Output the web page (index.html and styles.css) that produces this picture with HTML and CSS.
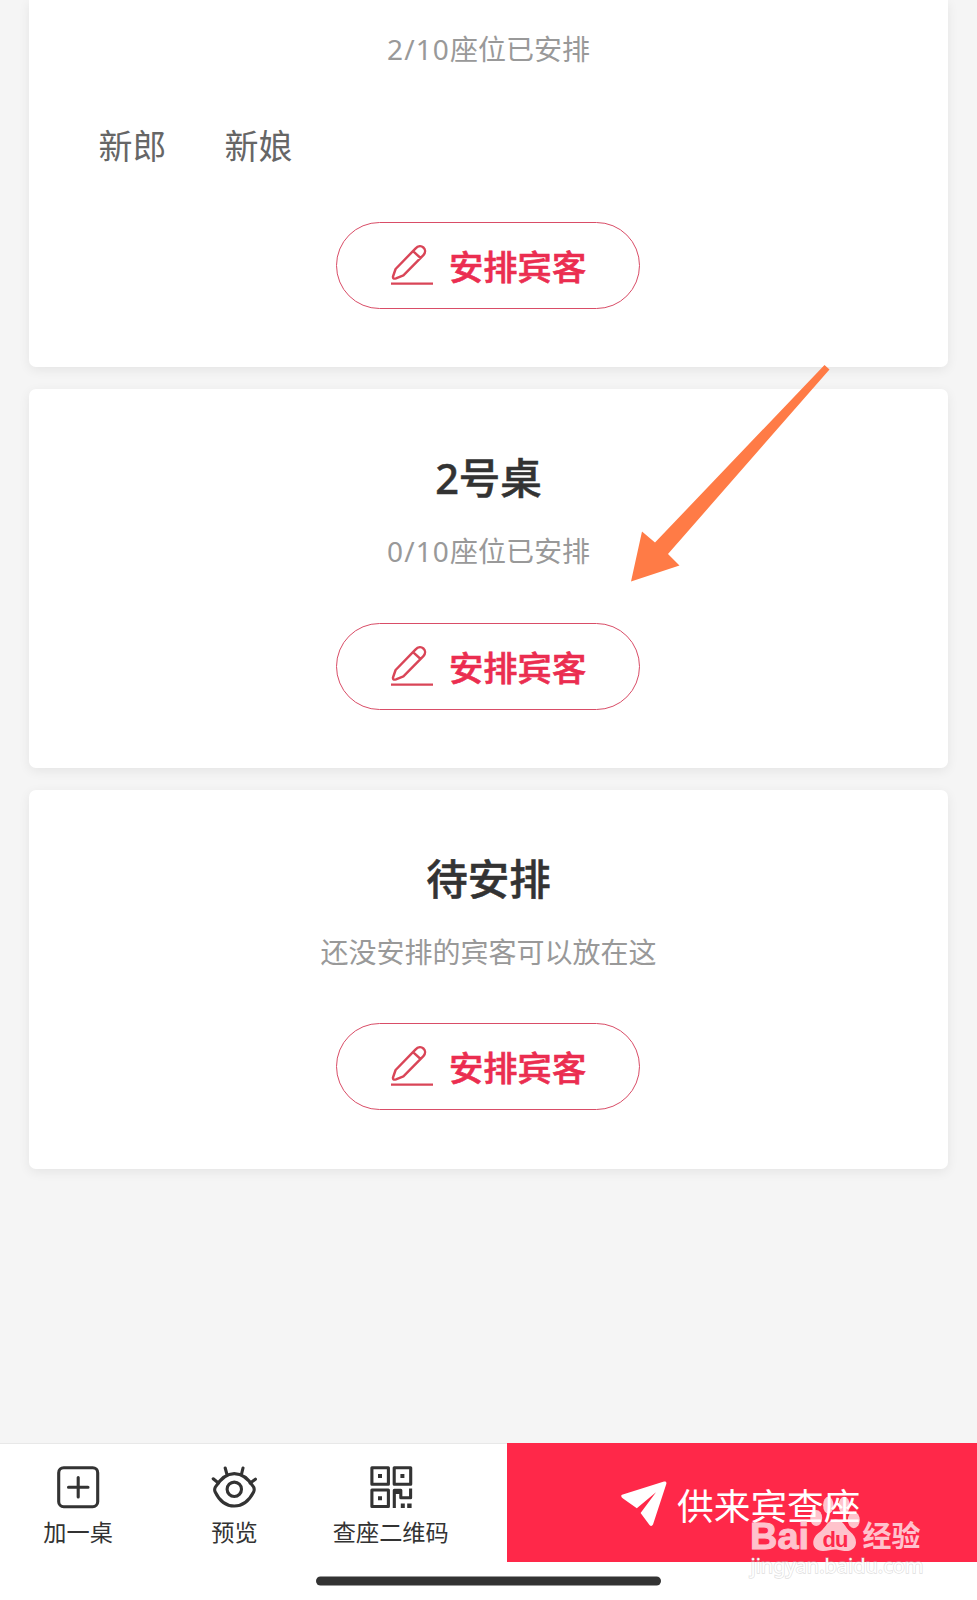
FILE: index.html
```html
<!DOCTYPE html>
<html lang="zh-CN">
	<head>
		<meta charset="utf-8">
		<meta name="viewport" content="width=device-width, initial-scale=1.0, viewport-fit=cover">
		<title>座位安排</title>
		<link rel="stylesheet" href="styles.css">
	</head>

	<body>
		<!-- shared pencil icon -->
		<svg class="defs" width="0" height="0">
			<symbol id="pencil" viewBox="0 0 42 40">
				<path d="M2 31.5 L4.6 24 L24.4 3.6 C30 -2.4 37.4 4.4 32.4 10.2 L12.4 30.4 L5 33.4 Q1.6 34.400 2 31.500 Z M22 6.2 L29.6 13"/>
				<path d="M0 38.6 H42"/>
			</symbol>
		</svg>

		<div class="page">
			<main class="tables">
				<section class="card card-first">
					<p class="seats"><span class="num">2/10</span>座位已安排</p>
					<ul class="guests">
						<li>新郎</li>
						<li>新娘</li>
					</ul>
					<button class="arrange"><svg class="pencil"><use href="#pencil"/></svg>安排宾客</button>
				</section>

				<section class="card">
					<h2>2号桌</h2>
					<p class="seats"><span class="num">0/10</span>座位已安排</p>
					<button class="arrange"><svg class="pencil"><use href="#pencil"/></svg>安排宾客</button>
				</section>

				<section class="card">
					<h2>待安排</h2>
					<p class="seats">还没安排的宾客可以放在这</p>
					<button class="arrange"><svg class="pencil"><use href="#pencil"/></svg>安排宾客</button>
				</section>
			</main>

			<footer class="toolbar">
				<nav class="tabs">
					<a class="tab">
						<svg class="icon" viewBox="0 0 46 46">
							<rect x="3.7" y="3.7" width="39" height="39" rx="5"/>
							<path d="M23.2 13.5 V33 M13.5 23.2 H33"/>
						</svg>
						加一桌
					</a>
					<a class="tab">
						<svg class="icon" viewBox="0 0 46 46">
							<path d="M4.4 23 C10 14 16 9.6 23.3 9.6 S37 14 42.6 23 Q43.8 25.6 42.6 28 C38 37 32 42 23.3 42 S8.500 37 4.2 28 Q3 25.600 4.400 23 Z"/>
							<circle cx="23.3" cy="25.3" r="7.2"/>
							<path d="M2.2 14.8 L7.4 19 M14.2 4 L16 10.6 M32 4 L30.4 10.6 M44.4 15.2 L39.2 19"/>
						</svg>
						预览
					</a>
					<a class="tab">
						<svg class="icon" viewBox="0 0 46 46">
							<g class="square">
								<rect x="3.9" y="3.7" width="16.5" height="16.5"/>
								<rect x="26.2" y="3.7" width="16.5" height="16.5"/>
								<rect x="3.9" y="26" width="16.5" height="16.5"/>
								<path d="M26.3 44 V26.2 H32.8 V33.8 H42.6 V24.5"/>
							</g>
							<path class="dots" d="M10 10h4v4h-4z M32.4 10h4v4h-4z M10 32.3h4v4h-4z M32.8 39.5h4v4.5h-4z M39.2 39.5h4.4v4.5h-4.4z M27 26h7v4h-7z"/>
						</svg>
						查座二维码
					</a>
				</nav>
				<button class="share">
					<svg class="plane" viewBox="0 0 46 46">
						<path d="M1 13.8 L43 .6 Q46 0 45.3 3 L32 43.6 Q30.5 46 28.5 44 L19.6 32 L35 11.2 L15.8 27.2 L2 17.5 Q-1 15 1 13.8 Z"/>
					</svg>
					供来宾查座
				</button>
			</footer>
			<div class="home-bar"></div>
		</div>

		<svg class="arrow" viewBox="0 0 200 218">
			<path d="M193.5 0 L198.500 4.5 L37 189 L48.5 200.5 L0 216.5 L11 166.5 L24 177.5 Z"/>
		</svg>

		<svg class="watermark" viewBox="0 0 185 95">
			<text class="bai" x="5" y="59.4" textLength="59" lengthAdjust="spacingAndGlyphs">Bai</text>
			<g class="paw">
				<ellipse cx="83.3" cy="15.2" rx="5.2" ry="8.5"/>
				<ellipse cx="99.2" cy="15.2" rx="5.6" ry="8.5"/>
				<ellipse cx="71.2" cy="28" rx="6" ry="8"/>
				<ellipse cx="108.8" cy="30" rx="6" ry="8.2"/>
				<path d="M90.5 29.5 C98 29.5 100 37 104.5 41 C115 49 112 61 101 61 C96 61 94 59.5 90 59.5 C86 59.5 83 61 78 61 C66 61 65 48 75.5 41.5 C81 37 83 29.5 90.5 29.5 Z"/>
			</g>
			<text class="du" x="77.5" y="56.8" textLength="26">du</text>
			<text class="jy" x="117.5" y="57" textLength="58">经验</text>
			<text class="url" x="5.5" y="83.3" textLength="173">jingyan.baidu.com</text>
		</svg>
	</body>
</html>
```

FILE: styles.css
```css
* { box-sizing: border-box; }

body {
	margin: 0;
	background: #f5f5f5;
	color: #333;
	font-family: "Noto Sans CJK SC", sans-serif;
}

h2, p, ul { margin: 0; padding: 0; }
button { font-family: inherit; padding: 0; }
.defs { position: absolute; }

.page {
	display: flex;
	flex-direction: column;
	height: 1600px;
	overflow: hidden;
}

.tables {
	flex: 1;
	display: flex;
	flex-direction: column;
	gap: 22px;
	padding: 0 29px;
}

.card {
	display: flex;
	flex-direction: column;
	align-items: center;
	height: 379px;
	padding-top: 59px;
	border-radius: 7px;
	background: #fff;
	box-shadow: 0 3px 12px rgba(0, 0, 0, .07);
}
.card-first {
	height: 367px;
	padding-top: 28px;
	border-radius: 0 0 7px 7px;
}

.card h2 {
	font-family: "Noto Sans", "Noto Sans CJK SC", sans-serif;
	font-size: 41.5px;
	font-weight: 500;
	line-height: 60px;
	-webkit-text-stroke: .5px #333;
}

.seats {
	margin-top: 22px;
	color: #999;
	font-size: 28px;
	line-height: 40px;
}
.card-first .seats { margin-top: 0; }
.num {
	font-family: "Noto Sans", sans-serif;
	letter-spacing: 1.1px;
}

.guests {
	display: flex;
	align-self: stretch;
	gap: 58px;
	margin-top: 51px;
	padding-left: 69.5px;
	list-style: none;
	color: #666;
	font-size: 34px;
	line-height: 50px;
}

.arrange {
	display: flex;
	align-items: center;
	width: 304px;
	height: 87px;
	margin: 51.5px 1px 0 0;
	padding: 0 0 1px 54px;
	gap: 16px;
	border: 1px solid #d94d67;
	border-radius: 44px;
	background: #fff;
	color: #eb2d50;
	font-size: 34.3px;
	font-weight: 500;
	-webkit-text-stroke: .6px #eb2d50;
	white-space: nowrap;
}

.pencil {
	flex: none;
	width: 42px;
	height: 40px;
	overflow: visible;
	fill: none;
	stroke: #d94557;
	stroke-width: 2.4;
	stroke-linejoin: round;
}

.toolbar {
	display: flex;
	justify-content: space-between;
	height: 119px;
	border-top: 1px solid #e8e8e8;
	background: #fff;
}

.tabs { display: flex; }
.tab {
	display: flex;
	flex-direction: column;
	align-items: center;
	width: 156.3px;
	padding-top: 20px;
	font-size: 23.2px;
	line-height: 42px;
}

.icon {
	width: 46px;
	height: 46px;
	fill: none;
	stroke: #333;
	stroke-width: 3.1;
	stroke-linecap: round;
	stroke-linejoin: round;
}
.square {
	stroke-linecap: butt;
}
.dots {
	fill: #333;
	stroke: none;
}

.share {
	display: flex;
	align-items: center;
	gap: 10px;
	width: 470px;
	margin-top: -1px;
	padding: 2px 0 0 114px;
	border: 0;
	background: #ff2849;
	color: #fff;
	font-size: 36.7px;
}
.plane {
	width: 46px;
	height: 46px;
	fill: #fff;
}

.home-bar {
	height: 38px;
	background: #fff;
}
.home-bar::before {
	content: "";
	display: block;
	width: 345px;
	height: 9px;
	margin: 0 auto;
	border-radius: 5px;
	background: #333;
	transform: translateY(14.5px);
}

/* overlays */
.arrow {
	position: absolute;
	left: 631px;
	top: 365px;
	width: 200px;
	height: 218px;
	fill: #ff7b46;
}

.watermark {
	position: absolute;
	left: 745px;
	top: 1490px;
	width: 185px;
	height: 95px;
	fill: #ffc2cd;
	font-family: "Liberation Sans", "Noto Sans CJK SC", sans-serif;
	font-weight: 700;
}
.bai {
	font-size: 36px;
	stroke: #ffc2cd;
	stroke-width: 1;
}
.paw {
	fill: #fff;
	opacity: .72;
}
.du { font-size: 22px; fill: #ff2849; }
.jy { font-size: 29px; }
.url {
	font-family: "Noto Sans", sans-serif;
	font-size: 20px;
	font-weight: 400;
	fill: #fff;
	stroke: rgba(190, 190, 190, .5);
	stroke-width: 1.4;
	paint-order: stroke;
}
```
